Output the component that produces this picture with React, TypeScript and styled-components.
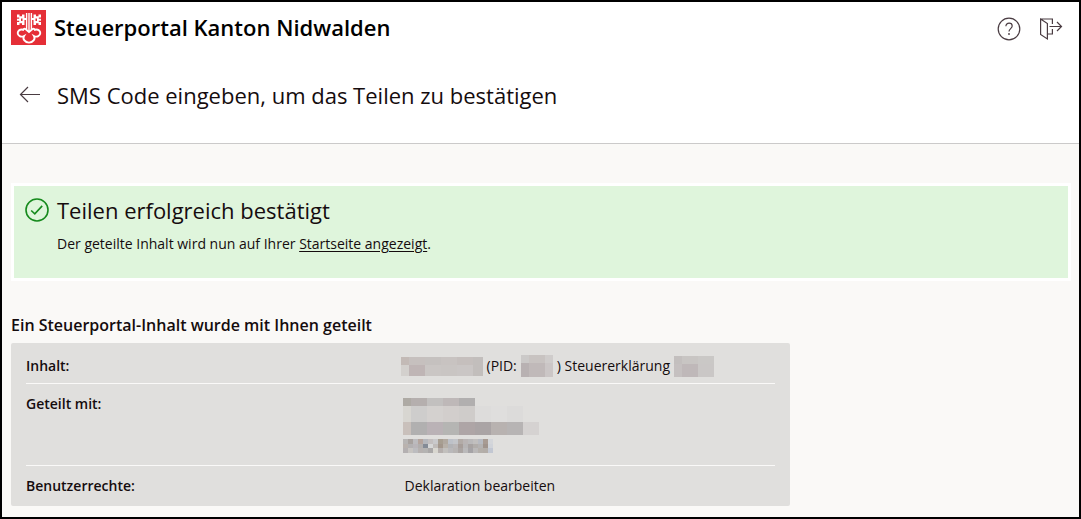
import React from "react";
import styled, { createGlobalStyle } from "styled-components";

const GlobalStyle = createGlobalStyle`
  *, *::before, *::after { box-sizing: border-box; }
  body {
    margin: 0;
    color: #150c0e;
    background: #faf9f7;
    font-family: "Open Sans", "Noto Sans", sans-serif;
    font-size: 14px;
    line-height: 20px;
  }
`;

const Page = styled.div`
  display: flex;
  flex-direction: column;
  min-height: 100vh;
  border: 2px solid #000;
  background: #faf9f7;
`;

const Header = styled.header`
  background: #fff;
  border-bottom: 1px solid #cbcaca;
`;

const TopBar = styled.div`
  display: flex;
  align-items: center;
  gap: 8px;
  padding: 8px 16px 8px 9px;
`;

const PortalName = styled.span`
  flex: 1;
  font-size: 22px;
  line-height: 35px;
  font-weight: 600;
  color: #000;
`;

const Actions = styled.div`
  display: flex;
  gap: 18px;
`;

const IconButton = styled.button`
  display: flex;
  padding: 0;
  border: 0;
  background: none;
  color: #4a3c42;
  cursor: pointer;
`;

const TitleBar = styled.div`
  display: flex;
  align-items: center;
  gap: 16px;
  padding: 25px 17px 31px;
`;

const Title = styled.h1`
  margin: 0;
  font-size: 22px;
  line-height: 34px;
  font-weight: 400;
`;

const Main = styled.main`
  padding: 39px 8px 11px 9px;
`;

const Banner = styled.section`
  display: flex;
  gap: 8px;
  padding: 9px 10px 24px;
  border: 3px solid #fff;
  background: #dff5dc;
`;

const BannerTitle = styled.h2`
  margin: 0;
  font-size: 22px;
  line-height: 30px;
  font-weight: 400;
`;

const BannerText = styled.p`
  margin: 9px 0 0;
  font-size: 14px;
  line-height: 20px;
`;

const Link = styled.a`
  color: inherit;
  text-decoration: underline;
  text-underline-offset: 2px;
`;

const SectionTitle = styled.h3`
  margin: 32px 0 6px;
  font-size: 16px;
  line-height: 24px;
  font-weight: 600;
`;

const Card = styled.div`
  max-width: 779px;
  padding: 3px 15px;
  border-radius: 2px;
  background: #e0dfdd;
`;

const Details = styled.table`
  width: 100%;
  table-layout: fixed;
  border-collapse: collapse;

  tr + tr { border-top: 1px solid #faf9f8; }
`;

const Label = styled.th`
  width: 50%;
  padding: 10px 0 7px;
  text-align: left;
  vertical-align: top;
  font-weight: 600;
`;

const Value = styled.td`
  padding: 10px 0 7px 4px;
  vertical-align: top;
`;

const Inline = styled.div`
  display: flex;
  align-items: center;
  gap: 4px;
  height: 20px;
  margin-left: -4px;
`;

const Person = styled.div`
  padding: 4px 0 5px;
  margin-left: -2px;
`;

const Pixels = styled.svg`
  display: block;
  flex: none;
`;

type Cell = [x: number, y: number, w: number, h: number, fill: string];

function Mosaic({ width, height, cells }: { width: number; height: number; cells: Cell[] }) {
  return (
    <Pixels width={width} height={height} shapeRendering="crispEdges" aria-hidden="true">
      {cells.map(([x, y, w, h, fill], i) => (
        <rect key={i} x={x} y={y} width={w} height={h} fill={fill} />
      ))}
    </Pixels>
  );
}

/** Turns a list of colours into a strip of equally wide cells. */
const strip = (x: number, y: number, w: number, h: number, fills: string[]): Cell[] =>
  fills.map((fill, i) => [x + i * w, y, w, h, fill]);

const nameCells: Cell[] = [
  [0, 0, 8, 8, "#c3bab6"],
  ...strip(8, 0, 16, 8, ["#c6c0be", "#c5c1bf", "#c8c3c1", "#c5bfbd"]),
  [72, 0, 10, 8, "#c2bebc"],
  [0, 8, 8, 11, "#d3d0cd"],
  ...strip(8, 8, 16, 11, ["#bfb5b5", "#cac6c4", "#c9c5c3", "#cac6c5"]),
  [72, 8, 10, 11, "#c2bebc"],
];

const pidCells: Cell[] = [
  [0, 0, 8, 8, "#cbc9c8"],
  [8, 0, 16, 8, "#c8c3c1"],
  [24, 0, 8, 8, "#cfcccb"],
  [0, 8, 8, 14, "#b8b1b2"],
  [8, 8, 16, 14, "#c0b9b9"],
  [24, 8, 8, 14, "#cbc6c6"],
];

const yearCells: Cell[] = [
  [0, 0, 8, 8, "#c3bfbe"],
  [8, 0, 16, 8, "#c8c5c3"],
  [24, 0, 16, 8, "#cac8c6"],
  [0, 8, 8, 13, "#c5c0c0"],
  [8, 8, 16, 13, "#bfb8b9"],
  [24, 8, 16, 13, "#cac7c6"],
];

const personCells: Cell[] = [
  [0, 0, 8, 8, "#aeaaa4"],
  ...strip(8, 0, 16, 8, ["#b5afae", "#c2c0bf", "#beb8b8", "#b1afaf"]),
  [0, 8, 8, 16, "#d8d6d1"],
  ...strip(8, 8, 16, 16, ["#cecdcc", "#d4d1cf", "#d2cecc", "#cfccca", "#dddcdb", "#dfdedd", "#dcdbda"]),
  [0, 24, 8, 13, "#c9c0bb"],
  ...strip(8, 24, 16, 13, ["#b1b0b0", "#bab2b6", "#b5b5b3", "#aea5a6", "#aaa4a5", "#b8b2b0", "#b7b4b4"]),
  [120, 24, 16, 13, "#d5d2d1"],
  ...strip(0, 41, 5, 5, ["#b7b5b4", "#a8a29f", "#bcbbbe", "#b4a49d", "#b5b7bc", "#c3bfbf", "#c9c9cb", "#a79e91", "#b1a9a0", "#bdc1c8", "#c3c5c9", "#b2aba7", "#b9b4b4", "#bab9ba", "#c1bfbe", "#b7bac1", "#a89b93", "#d4d6da"]),
  ...strip(0, 46, 5, 4, ["#b9b2ae", "#b3b1b2", "#b9b5b9", "#b1aead", "#848b96", "#d6d7d7", "#c0bcba", "#a3978c", "#b8b1a9", "#b2b3b6", "#b9b6b7", "#a79e9a", "#b6b4b5", "#a7a2a1", "#b1adaa", "#b4b2b2", "#a0948d", "#d0d3d9"]),
  ...strip(0, 50, 5, 5, ["#b4b0b1", "#c7c4c1", "#bcbcbf", "#b6b1b0", "#b4b3b2", "#aaa8a8", "#d9d7d0", "#b5afad", "#c2c0bd", "#b9b8ba", "#b7b4b3", "#aaa4a2", "#bab9ba", "#a5a3a6", "#bab8b8", "#b4afaa", "#b3ada8", "#c2c7d2"]),
];

function CantonCrest() {
  return (
    <svg width="35" height="35" viewBox="0 0 35 35" role="img" aria-label="Kanton Nidwalden">
      <rect width="35" height="35" fill="#e52f37" />
      <path d="M15.600 3v16M18 3v18M20.400 3v16" stroke="#fff" strokeWidth="1.400" />
      <g fill="#fff">
        <path d="M6 4.500h2.500v1.700H11V4.500h2.500V8H16v2h-2.500v5H11v-1.700H8.500V15H6v-3h2.200v-1.200H6V8.700h2.200V7.500H6z" />
        <path d="M30 4.500h-2.500v1.700H25V4.500h-2.500V8H20v2h2.500v5H25v-1.700h2.500V15H30v-3h-2.200v-1.200H30V8.700h-2.200V7.500H30z" />
      </g>
      <path d="M10 8.500h1.500v2.500H10zM24.500 8.500H26v2.500h-1.500z" fill="#e52f37" />
      <path
        d="M14.800 19.200c-1.200-.8-2.400-.4-2.700.6-2.800-1.100-5.400.8-5.400 3.300 0 2.800 3.200 4.400 6.300 2.900-1.800 3 1.200 6.600 5 6.600s6.800-3.600 5-6.600c3.100 1.500 6.300-.1 6.300-2.900 0-2.500-2.600-4.400-5.400-3.300-.3-1-1.500-1.400-2.700-.6L18 22z"
        fill="none"
        stroke="#fff"
        strokeWidth="1.900"
      />
    </svg>
  );
}

function HelpIcon() {
  return (
    <svg width="24" height="26" viewBox="0 -1 24 26" fill="none" stroke="currentColor" strokeWidth="1.2" aria-hidden="true">
      <circle cx="12" cy="13" r="10.800" />
      <path d="M8.900 10.300c0-2 1.400-3.200 3.200-3.200s3.100 1.100 3.100 2.800c0 2.600-3.200 2.900-3.200 5.600" />
      <circle cx="12" cy="18" r=".9" fill="currentColor" stroke="none" />
    </svg>
  );
}

function SignOutIcon() {
  return (
    <svg width="24" height="26" viewBox="0 -1 24 26" fill="none" stroke="currentColor" strokeWidth="1.2" aria-hidden="true">
      <path d="M1.600 3 8.400 7.500v15.500L1.600 18.500zM1.600 3h11.800v5M8.400 18h5v-5" />
      <path d="M10.500 10.500h12M18 6l4.500 4.500-4.500 4.500" />
    </svg>
  );
}

function BackIcon() {
  return (
    <svg width="22" height="18" viewBox="0 0 22 18" fill="none" stroke="currentColor" strokeWidth="1.200" aria-hidden="true">
      <path d="M21 8.500H1.500M9 1 1.500 8.500 9 16" />
    </svg>
  );
}

function SuccessIcon() {
  return (
    <svg width="25" height="27" viewBox="0 -2 25 27" fill="none" stroke="#168a1d" strokeWidth="1.600" aria-hidden="true">
      <circle cx="13" cy="13" r="11" />
      <path d="m7.200 13.500 3.600 3.400 7.400-8" />
    </svg>
  );
}

export default function App() {
  return (
    <Page>
      <GlobalStyle />
      <Header>
        <TopBar>
          <CantonCrest />
          <PortalName>Steuerportal Kanton Nidwalden</PortalName>
          <Actions>
            <IconButton type="button" aria-label="Hilfe"><HelpIcon /></IconButton>
            <IconButton type="button" aria-label="Abmelden"><SignOutIcon /></IconButton>
          </Actions>
        </TopBar>
        <TitleBar>
          <IconButton type="button" aria-label="Zurück"><BackIcon /></IconButton>
          <Title>SMS Code eingeben, um das Teilen zu bestätigen</Title>
        </TitleBar>
      </Header>
      <Main>
        <Banner role="status">
          <SuccessIcon />
          <div>
            <BannerTitle>Teilen erfolgreich bestätigt</BannerTitle>
            <BannerText>
              Der geteilte Inhalt wird nun auf Ihrer <Link href="#startseite">Startseite angezeigt</Link>.
            </BannerText>
          </div>
        </Banner>
        <SectionTitle>Ein Steuerportal-Inhalt wurde mit Ihnen geteilt</SectionTitle>
        <Card>
          <Details>
            <tbody>
              <tr>
                <Label scope="row">Inhalt:</Label>
                <Value>
                  <Inline>
                    <Mosaic width={82} height={19} cells={nameCells} />
                    <span>(PID:</span>
                    <Mosaic width={32} height={22} cells={pidCells} />
                    <span>) Steuererklärung</span>
                    <Mosaic width={40} height={21} cells={yearCells} />
                  </Inline>
                </Value>
              </tr>
              <tr>
                <Label scope="row">Geteilt mit:</Label>
                <Value>
                  <Person>
                    <Mosaic width={136} height={55} cells={personCells} />
                  </Person>
                </Value>
              </tr>
              <tr>
                <Label scope="row">Benutzerrechte:</Label>
                <Value>Deklaration bearbeiten</Value>
              </tr>
            </tbody>
          </Details>
        </Card>
      </Main>
    </Page>
  );
}
